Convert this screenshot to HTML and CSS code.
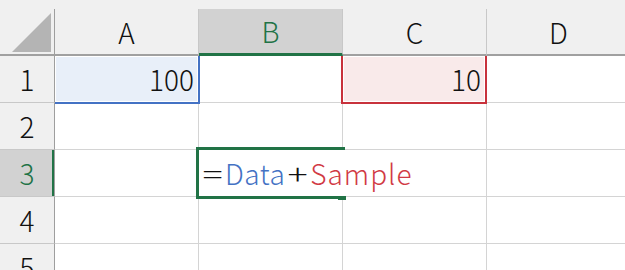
FILE: index.html
```html
<!DOCTYPE html>
<html lang="ja">
<head>
  <meta charset="UTF-8" />
  <title>Sheet</title>
  <link rel="stylesheet" href="styles.css">
</head>
<body>
  <div class="sheet">
    <div class="corner">
      <svg width="54" height="45" viewBox="0 0 54 45"><polygon points="12,43 51,43 51,4" fill="#b4b4b4"/></svg>
    </div>
    <div class="col-head">A</div>
    <div class="col-head active">B</div>
    <div class="col-head">C</div>
    <div class="col-head">D</div>

    <div class="row-head">1</div>
    <div class="cell num ref-blue">100</div>
    <div class="cell"></div>
    <div class="cell num ref-red">10</div>
    <div class="cell"></div>

    <div class="row-head">2</div>
    <div class="cell"></div>
    <div class="cell"></div>
    <div class="cell"></div>
    <div class="cell"></div>

    <div class="row-head active">3</div>
    <div class="cell"></div>
    <div class="cell editing">
      <span class="op">=</span><span class="ref-a">Data</span><span class="op">+</span><span class="ref-b">Sample</span>
      <div class="sel">
        <span class="sel-edge"></span>
        <span class="sel-handle"></span>
      </div>
    </div>
    <div class="cell"></div>
    <div class="cell"></div>

    <div class="row-head">4</div>
    <div class="cell"></div>
    <div class="cell"></div>
    <div class="cell"></div>
    <div class="cell"></div>

    <div class="row-head">5</div>
    <div class="cell"></div>
    <div class="cell"></div>
    <div class="cell"></div>
    <div class="cell"></div>
  </div>
</body>
</html>
```

FILE: styles.css
```css
body {
  margin: 0;
  background: #fff;
  overflow: hidden;
  font-family: "Noto Sans CJK JP", "Noto Sans", sans-serif;
  font-size: 28px;
  font-weight: 300;
  color: #111;
}

.sheet {
  display: grid;
  grid-template-columns: 55px 144px 144px 144px 144px;
  grid-template-rows: 56px repeat(5, 47px);
  background: #f0f0f0;
}

.corner,
.col-head {
  margin-top: 9px;
  box-sizing: border-box;
  border-bottom: 2px solid #a0a0a0;
  background: #f0f0f0;
}

.corner {
  border-right: 1px solid #9e9e9e;
}

.corner svg {
  display: block;
}

.col-head {
  display: flex;
  align-items: center;
  justify-content: center;
  border-right: 1px solid #c8c8c8;
}

.col-head.active {
  background: #d2d2d2;
  color: #217346;
  border-bottom: 3px solid #217346;
}

.row-head {
  display: flex;
  align-items: center;
  justify-content: center;
  box-sizing: border-box;
  background: #f0f0f0;
  border-right: 1px solid #9e9e9e;
  border-bottom: 1px solid #c8c8c8;
}

.row-head.active {
  background: #d2d2d2;
  color: #217346;
  box-shadow: inset -2px 0 0 #217346;
}

.cell {
  display: flex;
  align-items: center;
  box-sizing: border-box;
  padding: 0 4px;
  background: #fff;
  border-right: 1px solid #d4d4d4;
  border-bottom: 1px solid #d4d4d4;
  white-space: nowrap;
}

.num {
  justify-content: flex-end;
}

.ref-blue {
  position: relative;
  z-index: 1;
  margin-right: -1px;
  margin-bottom: -1px;
  background: #e8eff9;
  border-right: 2px solid #4472c4;
  border-bottom: 2px solid #4472c4;
  box-shadow: inset 0 0 0 1px #fff;
}

.ref-red {
  position: relative;
  z-index: 1;
  margin-left: -2px;
  margin-bottom: -1px;
  background: #f9eaea;
  border-left: 2px solid #c8323c;
  border-right: 2px solid #c8323c;
  border-bottom: 2px solid #c8323c;
  box-shadow: inset 0 0 0 1px #fff;
}

.editing {
  position: relative;
  z-index: 2;
  overflow: visible;
  padding-left: 1px;
  border-right: 1px solid #fff;
}

.op {
  flex: none;
  width: 25px;
  text-align: center;
  transform: scaleX(1.35);
  color: #111;
}

.ref-a {
  color: #4472c4;
  letter-spacing: 0.5px;
}

.ref-b {
  color: #d13a44;
  letter-spacing: 1px;
}

.sel {
  position: absolute;
  left: -3px;
  top: -3px;
  width: 149px;
  height: 52px;
  box-sizing: border-box;
  border-top: 3px solid #217346;
  border-left: 3px solid #217346;
}

.sel-edge {
  position: absolute;
  left: -3px;
  top: 46px;
  width: 142px;
  height: 3px;
  background: #217346;
}

.sel-handle {
  position: absolute;
  left: 139px;
  top: 46px;
  width: 8px;
  height: 4px;
  background: #217346;
}
```
